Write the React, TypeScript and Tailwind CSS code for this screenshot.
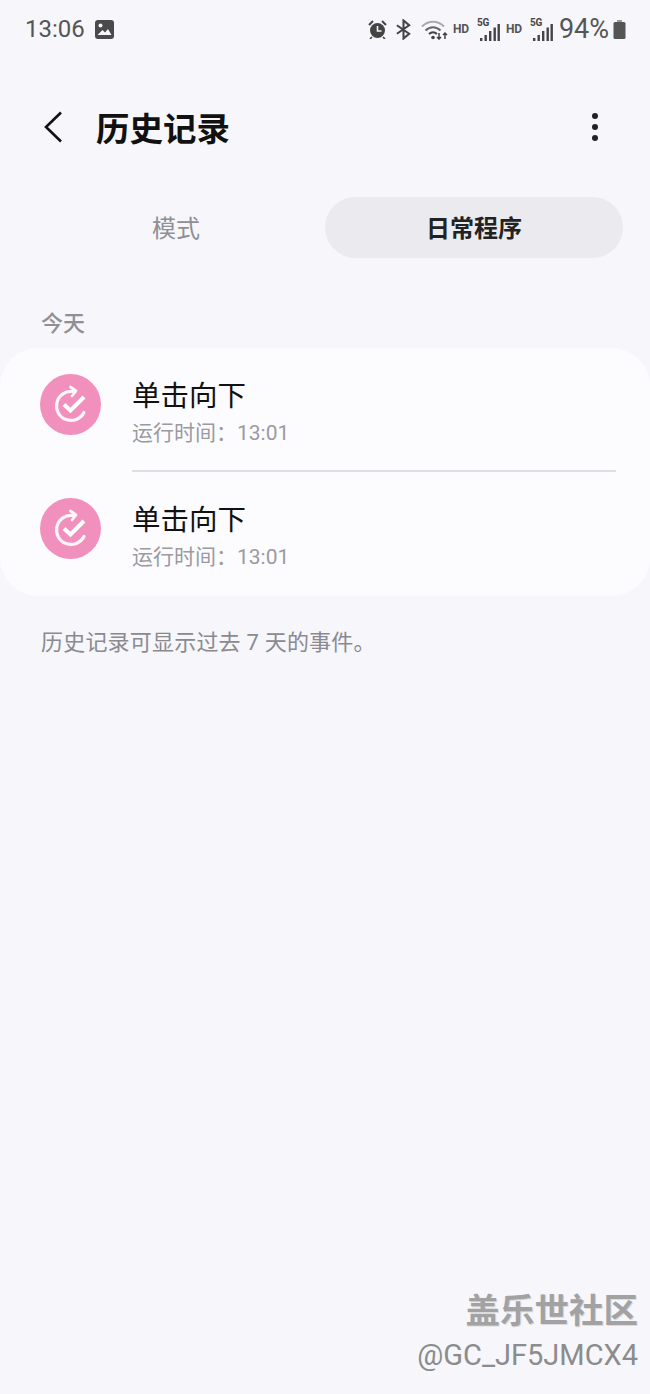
const font = "font-['Roboto','Noto_Sans_CJK_SC',sans-serif]";

function Signal() {
  return (
    <span className="relative flex h-[23px] w-[22px] items-end justify-end">
      <span className="absolute -left-[1px] top-0 text-[10px] font-bold leading-[10px] text-[#444]">5G</span>
      <svg width="22" height="17" viewBox="0 0 22 17" fill="#444">
        <rect x="2" y="14" width="2.4" height="3" />
        <rect x="6.5" y="11" width="2.4" height="6" />
        <rect x="11" y="7" width="2.4" height="10" />
        <rect x="15.5" y="3.5" width="2.4" height="13.5" />
        <rect x="19.5" y="0" width="2.4" height="17" />
      </svg>
    </span>
  );
}

function StatusBar() {
  return (
    <div className="flex h-[58px] items-center justify-between pl-[25px] pr-[24px] text-[#555]">
      <div className="flex items-center gap-[10px]">
        <span className="text-[24px] leading-none">13:06</span>
        <svg width="19" height="19" viewBox="0 0 19 19">
          <rect width="19" height="19" rx="3" fill="#4a4a4a" />
          <circle cx="5.5" cy="5.5" r="2" fill="#f6f6fb" />
          <path d="M2.5 15l5-5 2.5 2.5 3-3.5 3.5 6z" fill="#f6f6fb" />
        </svg>
      </div>
      <div className="flex items-center">
        {/* alarm */}
        <svg width="19" height="19" viewBox="0 0 19 19" className="mr-[8px]">
          <path d="M1 5l4-4M18 5l-4-4" stroke="#444" strokeWidth="2" fill="none" />
          <circle cx="9.5" cy="10.5" r="7.5" fill="#444" />
          <path d="M9.5 6v5h4" stroke="#f6f6fb" strokeWidth="1.6" fill="none" />
          <path d="M4 17l-2 2M15 17l2 2" stroke="#444" strokeWidth="1.6" />
        </svg>
        {/* bluetooth */}
        <svg width="17" height="21" viewBox="0 0 18 21" fill="none" stroke="#444" strokeWidth="2.2" className="mr-[9px]">
          <path d="M2 6l13 9-6 5V1l6 5L2 15" />
        </svg>
        {/* wifi */}
        <svg width="27" height="22" viewBox="0 0 27 22" fill="none" className="mr-[5px]">
          <path d="M1 8.5C7 2 17 2 23 8.5" stroke="#aaa" strokeWidth="2" />
          <path d="M4.5 12.5C9 8 15 8 19.5 12.5" stroke="#666" strokeWidth="2" />
          <path d="M8 16c2.500-2.500 5.500-2.500 8 0" stroke="#444" strokeWidth="2" />
          <circle cx="12" cy="19.500" r="1.800" fill="#444" />
          <path d="M18 15v6M16 19l2 2 2-2M24 21v-6M22 17l2-2 2 2" stroke="#444" strokeWidth="1.500" />
        </svg>
        <span className="mr-[9px] w-[16px] text-[12px] font-bold leading-none text-[#555]">HD</span>
        <Signal />
        <span className="ml-[6px] mr-[9px] w-[16px] text-[12px] font-bold leading-none text-[#555]">HD</span>
        <Signal />
        <span className="ml-[6px] text-[27px] leading-none text-[#555]">94%</span>
        <svg width="13" height="19" viewBox="0 0 13 19" fill="#555" className="ml-[4px]">
          <rect x="4" y="0" width="5" height="2" fill="#999" />
          <rect x="0.500" y="2" width="12" height="17" rx="1.500" />
        </svg>
      </div>
    </div>
  );
}

function RoutineIcon() {
  return (
    <div className="flex size-[61px] shrink-0 items-center justify-center rounded-full bg-[#f190bd]">
      <svg width="34" height="34" viewBox="0 0 34 34" fill="none" stroke="#fff" className="overflow-visible">
        <path d="M30 24.500A14.500 14.500 0 1 1 18.500 3.500" strokeWidth="3.200" strokeLinecap="round" opacity="0.900" />
        <path d="M16.500 -1L22 3 18 8" strokeWidth="2.800" strokeLinecap="round" strokeLinejoin="round" opacity="0.900" />
        <path d="M10 16.500l6.500 6L30 9" strokeWidth="4" />
      </svg>
    </div>
  );
}

function HistoryRow() {
  return (
    <div className="flex h-[61px] items-start gap-[31px] pl-[40px]">
      <RoutineIcon />
      <div className="flex flex-col pt-[5px]">
        <span className="text-[28.5px] leading-[36px] text-[#111]">单击向下</span>
        <span className="mt-[5px] text-[21px] leading-[26px] text-[#9a9aa0]">运行时间：13:01</span>
      </div>
    </div>
  );
}

export default function App() {
  return (
    <div className={`${font} flex h-[1394px] w-[650px] flex-col overflow-hidden bg-[#f6f6fb]`}>
      <StatusBar />

      <div className="mt-[46px] flex h-[50px] items-center justify-between pl-[43px] pr-[49px]">
        <div className="flex items-center">
          <svg width="20" height="32" viewBox="0 0 20 32" fill="none" stroke="#111" strokeWidth="2.6" className="-mt-[5px]">
            <path d="M18 1.500L3 16l15 14.500" />
          </svg>
          <span className="ml-[33px] pt-[1px] text-[33.5px] font-bold leading-none text-[#111]">历史记录</span>
        </div>
        <svg width="12" height="28" viewBox="0 0 12 28" fill="#222" className="-mt-[5px]">
          <circle cx="6" cy="3" r="3" />
          <circle cx="6" cy="14" r="3" />
          <circle cx="6" cy="25" r="3" />
        </svg>
      </div>

      <div className="mt-[43px] flex h-[61px] px-[27px] text-[24px]">
        <div className="flex flex-1 items-center justify-center pt-[3px] text-[#8f8f94]">模式</div>
        <div className="flex w-[298px] items-center justify-center rounded-full bg-[#ebebef] pt-[3px] font-bold text-[#222]">
          日常程序
        </div>
      </div>

      <div className="mt-[53px] pl-[41px] text-[22px] font-medium leading-[26px] text-[#8f8f94]">今天</div>

      <div className="mt-[11px] flex h-[248px] flex-col rounded-[38px] bg-[#fcfcff] pt-[26px]">
        <HistoryRow />
        <div className="ml-[132px] mr-[34px] mt-[35px] h-[2px] bg-[#dfdfe3]" />
        <div className="mt-[26px]">
          <HistoryRow />
        </div>
      </div>

      <p className="mt-[34px] pl-[41px] text-[22px] leading-[26px] tracking-[0.2px] text-[#8a8a90]">历史记录可显示过去 7 天的事件。</p>

      <div className="mt-auto mb-[24px] flex flex-col items-end pr-[12px] leading-none">
        <span className="text-[34.5px] font-bold text-[#a2a2a2] [text-shadow:1px_1px_0_#dcdce0]">盖乐世社区</span>
        <span className="mt-[13px] text-[29px] text-[#8c8c8c]">@GC_JF5JMCX4</span>
      </div>
    </div>
  );
}
